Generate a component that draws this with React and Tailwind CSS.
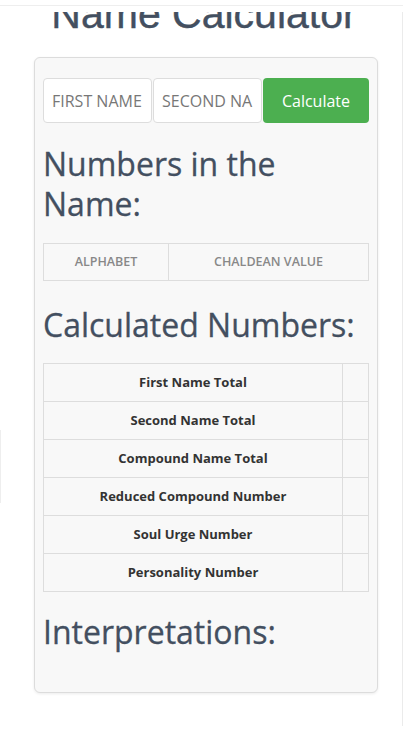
import React from "react";

const rows = [
  "First Name Total",
  "Second Name Total",
  "Compound Name Total",
  "Reduced Compound Number",
  "Soul Urge Number",
  "Personality Number",
];

export default function App() {
  return (
    <div className="relative w-[408px] h-[732px] overflow-hidden bg-white" style={{ fontFamily: '"Open Sans", "Noto Sans", sans-serif' }}>
      <div className="w-[403px] h-[732px] border-r border-[#ebebeb]">
        <h1
          className="w-[408px] mt-[-6px] text-center text-[41px] leading-[40px] text-[#434f60]"
          style={{ fontFamily: '"Liberation Sans", Arial, sans-serif', WebkitTextStroke: "0.4px #434f60" }}
        >
          Name Calculator
        </h1>
        <div className="ml-[34px] mt-[23px] w-[344px] h-[636px] bg-[#f8f8f8] border border-[#dcdcdc] rounded-[6px] shadow-[0_1px_3px_rgba(0,0,0,0.08)] px-[8px] pt-[20px]">
          <div className="flex gap-[1px] h-[45px]">
            <input
              placeholder="FIRST NAME"
              className="w-[109px] h-[45px] bg-white border border-[#ddd] rounded-[4px] pl-[8px] pr-[8px] text-[16px] text-[#555] placeholder:text-[#777] outline-none"
            />
            <input
              placeholder="SECOND NAME"
              className="w-[109px] h-[45px] bg-white border border-[#ddd] rounded-[4px] pl-[8px] pr-[8px] text-[16px] text-[#555] placeholder:text-[#777] outline-none"
            />
            <button className="w-[107px] h-[45px] bg-[#4caf50] rounded-[4px] text-white text-[16px]">
              Calculate
            </button>
          </div>
          <h2 className="mt-[21px] text-[32px] leading-[40px] text-[#434f60]" style={{ WebkitTextStroke: "0.3px #434f60" }}>
            Numbers in the Name:
          </h2>
          <div className="mt-[19px] flex h-[38px] border border-[#ddd] text-[12.5px] font-semibold text-[#888] uppercase">
            <div className="w-[125px] border-r border-[#ddd] flex items-center justify-center">Alphabet</div>
            <div className="flex-1 flex items-center justify-center">Chaldean Value</div>
          </div>
          <h2 className="mt-[24px] text-[32px] leading-[40px] text-[#434f60]" style={{ WebkitTextStroke: "0.3px #434f60" }}>
            Calculated Numbers:
          </h2>
          <div className="mt-[18px] border-l border-r border-t border-[#ddd]">
            {rows.map((r) => (
              <div key={r} className="flex h-[38px] border-b border-[#ddd]">
                <div className="w-[299px] border-r border-[#ddd] flex items-center justify-center text-[13px] font-bold text-[#333]">
                  {r}
                </div>
                <div className="flex-1" />
              </div>
            ))}
          </div>
          <h2 className="mt-[20px] text-[32px] leading-[40px] text-[#434f60]" style={{ WebkitTextStroke: "0.3px #434f60" }}>
            Interpretations:
          </h2>
        </div>
      </div>
      <div className="absolute left-0 top-0 w-[403px] h-[12px] bg-white">
        <div className="mt-[5px] h-px bg-[#eeeeee]" />
      </div>
      <div className="absolute left-0 top-[430px] w-px h-[73px] bg-[#eeeeee]" />
    </div>
  );
}
